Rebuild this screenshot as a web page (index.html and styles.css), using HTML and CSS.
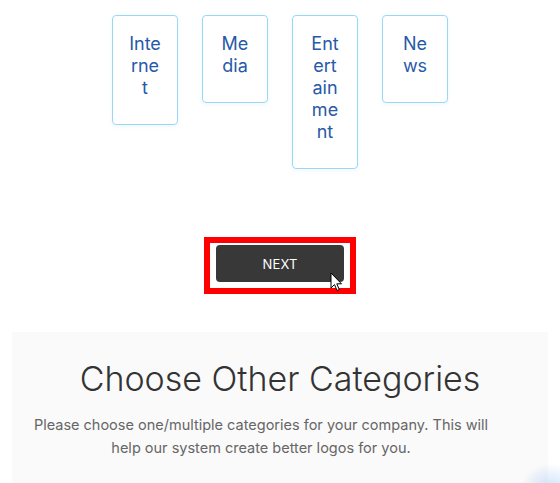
FILE: index.html
```html
<!DOCTYPE html>
<html lang="en">
<head>
<meta charset="utf-8">
<link rel="stylesheet" href="styles.css">
</head>
<body>
  <div class="cards">
    <div class="card"><span>Internet</span></div>
    <div class="card"><span>Media</span></div>
    <div class="card"><span>Entertainment</span></div>
    <div class="card"><span>News</span></div>
  </div>
  <div class="actions">
    <div class="highlight">
      <button class="next">NEXT</button>
      <svg class="cursor" width="13" height="20" viewBox="0 0 13 20"><path d="M1 1 L1 16 L4.5 12.5 L7 18.5 L9.3 17.5 L6.8 11.8 L11.5 11.8 Z" fill="#fff" stroke="#000" stroke-width="1" stroke-linejoin="round"/></svg>
    </div>
  </div>
  <section class="other">
    <h2>Choose Other Categories</h2>
    <p>Please choose one/multiple categories for your company. This will help our system create better logos for you.</p>
  </section>
  <div class="glow"></div>
</body>
</html>
```

FILE: styles.css
```css
html, body {
  margin: 0;
  padding: 0;
  background: #fff;
  font-family: Inter, "Noto Sans", sans-serif;
  overflow: hidden;
  height: 483px;
}
.cards {
  display: flex;
  justify-content: center;
  align-items: flex-start;
  gap: 24px;
  padding-top: 15px;
}
.card {
  width: 66px;
  box-sizing: border-box;
  border: 1px solid #9ad8f5;
  border-radius: 4px;
  padding: 17px 16px 25px;
  text-align: center;
  color: #2759a8;
  font-size: 18px;
  line-height: 22px;
  word-break: break-all;
  box-shadow: 0 1px 4px rgba(120, 190, 230, 0.15);
}
.actions {
  display: flex;
  justify-content: center;
  margin-top: 68px;
}
.highlight {
  position: relative;
  border: 6px solid #f00;
  padding: 2px 6px 6px;
}
.next {
  display: block;
  width: 128px;
  height: 37px;
  border: none;
  border-radius: 4px;
  background: #383838;
  color: #fff;
  font-family: Inter, "Noto Sans", sans-serif;
  font-size: 13px;
  letter-spacing: 0.2px;
}
.cursor {
  position: absolute;
  left: 120px;
  top: 29px;
}
.other {
  margin: 38px 12px 0;
  background: #fafafa;
  padding: 26px 0 40px;
  text-align: center;
}
.other h2 {
  margin: 0;
  font-size: 34px;
  font-weight: 300;
  color: #333;
  line-height: 42px;
}
.other p {
  margin: 13px 52px 0 14px;
  font-size: 14.5px;
  line-height: 23px;
  color: #666;
}
.glow {
  position: fixed;
  right: -20px;
  bottom: -30px;
  width: 60px;
  height: 50px;
  border-radius: 50%;
  background: radial-gradient(ellipse at center, rgba(120, 170, 240, 0.35), rgba(120, 170, 240, 0) 70%);
}
```
